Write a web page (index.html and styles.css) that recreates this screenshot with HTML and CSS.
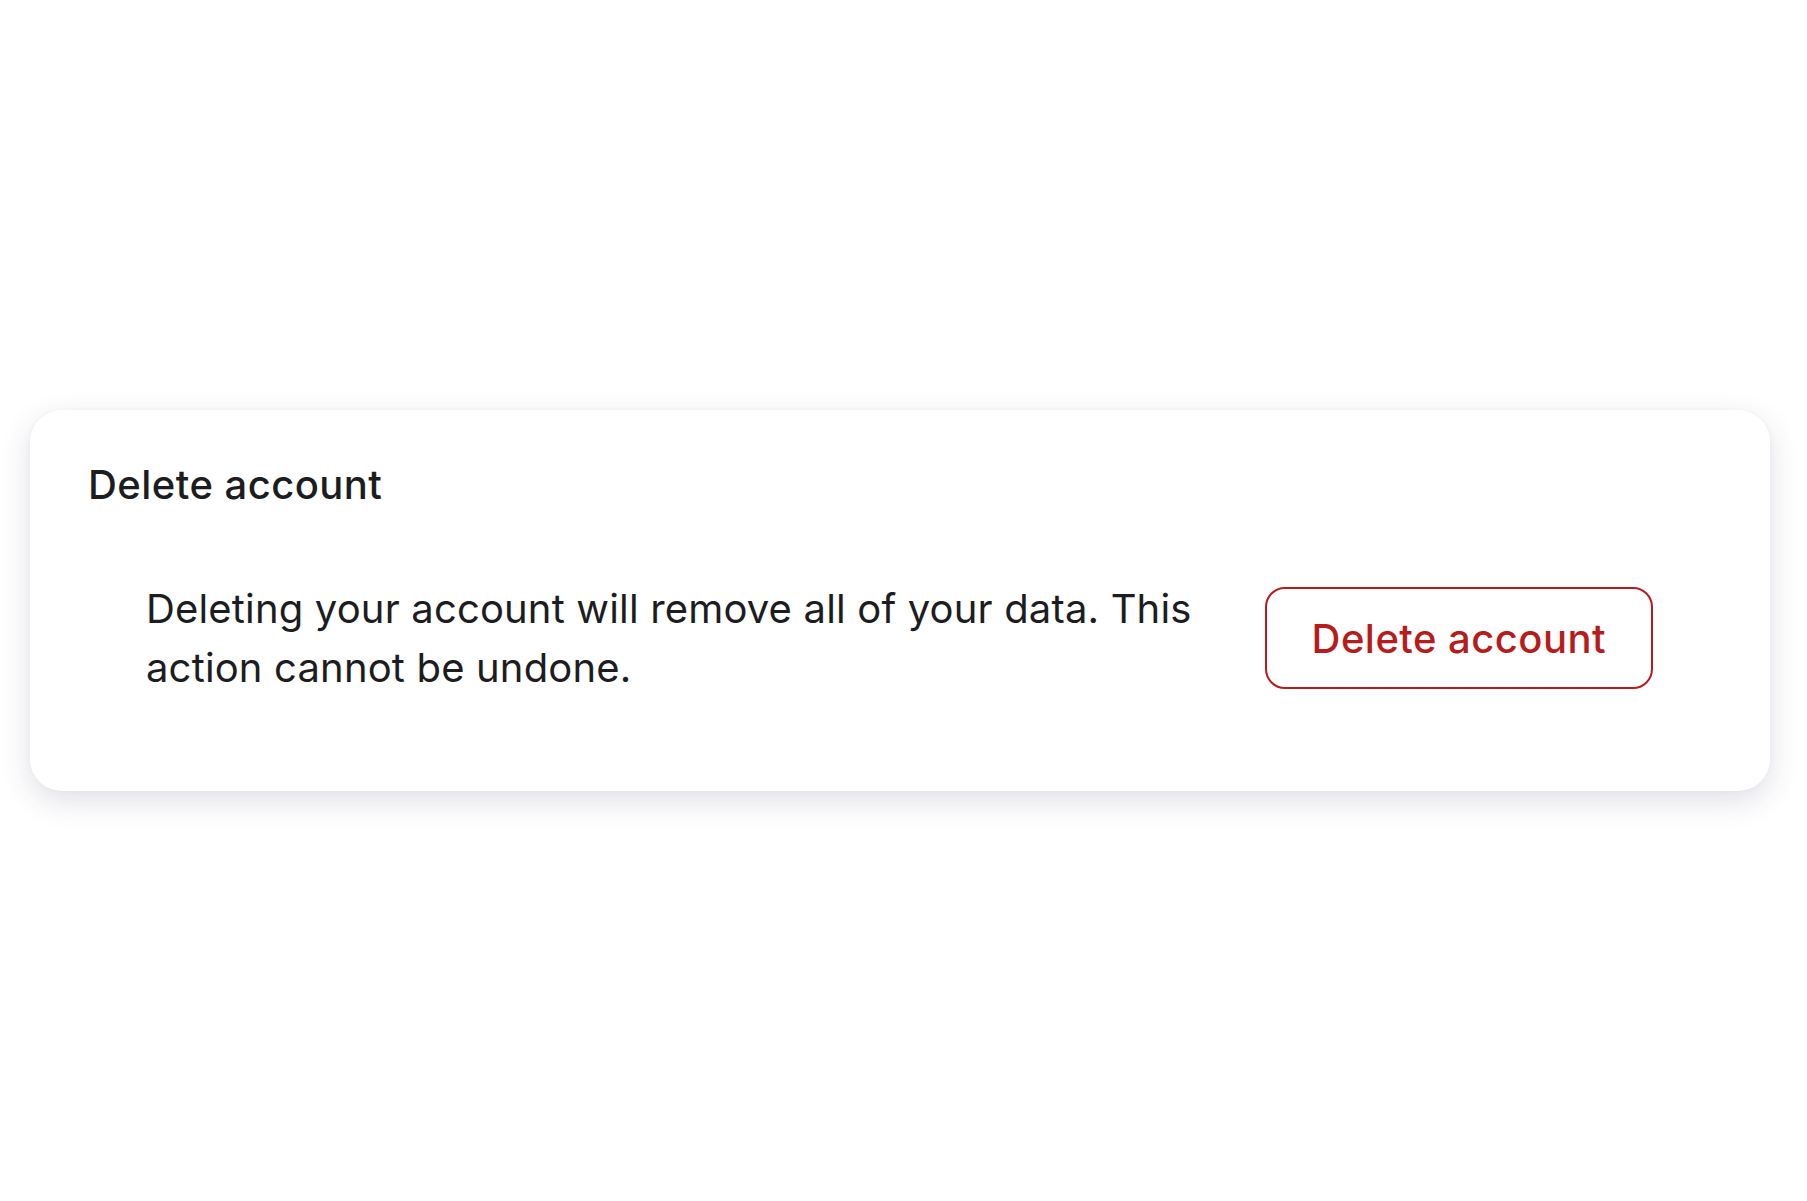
FILE: index.html
```html
<!DOCTYPE html>
<html lang="en">
<head>
<meta charset="utf-8">
<title>Delete account</title>
<link rel="stylesheet" href="styles.css">
</head>
<body>
<main class="page">
  <section class="card">
    <h2 class="card-title">Delete account</h2>
    <div class="card-row">
      <p class="card-text">Deleting your account will remove all of your data. This action cannot be undone.</p>
      <button class="btn-danger" type="button">Delete account</button>
    </div>
  </section>
</main>
</body>
</html>
```

FILE: styles.css
```css
html, body {
  margin: 0;
  padding: 0;
  background: #ffffff;
}

body {
  font-family: Inter, "Noto Sans", "Liberation Sans", sans-serif;
  color: #1d1d1f;
}

.page {
  box-sizing: border-box;
  height: 1201px;
  display: flex;
  align-items: center;
  padding: 0 37px 0 30px;
}

.card {
  box-sizing: border-box;
  width: 100%;
  height: 381px;
  background: #ffffff;
  border-radius: 32px;
  box-shadow: 0 10px 30px rgba(50, 50, 100, 0.15), 0 0 6px rgba(50, 50, 90, 0.03);
  padding: 45px 58px 0 58px;
}

.card-title {
  margin: 0;
  font-size: 40px;
  line-height: 59px;
  font-weight: 500;
  letter-spacing: 0.45px;
  color: #1d1d1f;
}

.card-row {
  display: flex;
  align-items: center;
  gap: 58px;
  margin-top: 65px;
  padding: 0 59px 0 58px;
}

.card-text {
  flex: 1;
  margin: 0;
  font-size: 40px;
  line-height: 59px;
  font-weight: 400;
  letter-spacing: 0.16px;
  color: #1d1d1f;
}

.btn-danger {
  flex: none;
  box-sizing: border-box;
  height: 102px;
  padding: 0 45px;
  font-family: inherit;
  font-size: 40px;
  line-height: 59px;
  font-weight: 500;
  letter-spacing: 0.45px;
  color: #b71c1c;
  background: #ffffff;
  border: 2.4px solid #b71c1c;
  border-radius: 20px;
}
```
